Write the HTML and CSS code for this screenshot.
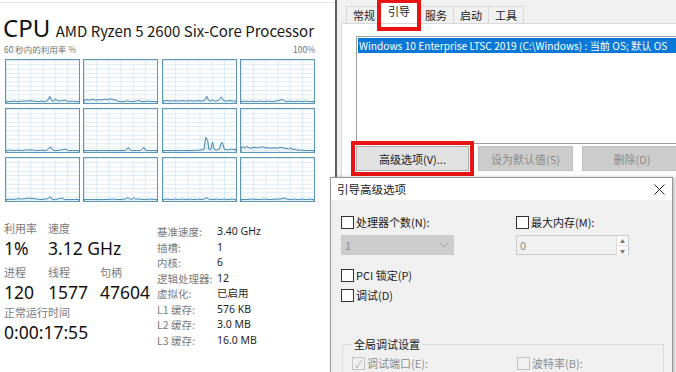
FILE: index.html
```html
<!DOCTYPE html>
<html lang="zh-CN">
<head>
    <meta charset="UTF-8">
    <meta name="viewport" content="width=device-width, initial-scale=1.0">
    <title>CPU - 系统配置</title>
    <link rel="stylesheet" href="styles.css">
</head>
<body>

<div class="screen">
    <!-- 任务管理器 CPU 页 -->
    <section class="taskmgr">
        <div class="cpu-head">
            <span class="cpu-title">CPU</span>
            <span class="cpu-name">AMD Ryzen 5 2600 Six-Core Processor</span>
        </div>
        <div class="graph-caption">
            <span>60 秒内的利用率 %</span>
            <span>100%</span>
        </div>

        <div class="graphs">
            <div class="graph"><svg viewBox="0 0 75 45" preserveAspectRatio="none"><polyline points="0,45 0,43.5 4,43.5 8,43 12,43.5 16,43 20,43 24,42.5 28,43 32,43.5 36,43 40,43.5 43,42 45,38 47,42.5 49,43 51,40.5 53,43 57,42.5 61,42 64,43.5 68,43 72,43.5 75,43.5 75,45"/></svg></div>
            <div class="graph"><svg viewBox="0 0 75 45" preserveAspectRatio="none"><polyline points="0,45 0,42 3,41.5 6,42 9,41 12,42 15,41.5 18,41.8 21,41 24,41.5 27,40.5 30,41.5 33,42 36,43.5 40,43.5 44,43 45,42 46,43.5 50,43.5 54,43 57,42 58,43.5 62,43.5 66,43 70,43.5 75,43.5 75,45"/></svg></div>
            <div class="graph"><svg viewBox="0 0 75 45" preserveAspectRatio="none"><polyline points="0,45 0,43 4,42.5 8,43 12,42.5 16,43 20,42.5 24,43 28,42.5 32,43 36,42.5 40,43 43,42 45,38 47,42.5 49,43 51,41.5 53,43 57,42.5 60,38.5 62,42.5 65,43 69,42.5 72,43 75,43 75,45"/></svg></div>
            <div class="graph"><svg viewBox="0 0 75 45" preserveAspectRatio="none"><polyline points="0,45 0,43.5 4,43 8,43.5 12,43 16,43.5 20,43 24,43.5 28,43 32,43.5 36,43 40,42 42,41.3 44,42 46,43.5 50,43 54,43.5 58,43 62,43.5 66,43 70,43.5 75,43.5 75,45"/></svg></div>
            <div class="graph"><svg viewBox="0 0 75 45" preserveAspectRatio="none"><polyline points="0,45 0,43.5 4,43 8,43.5 12,43 16,43.5 20,43 24,42.8 28,43 32,43.5 36,43 40,43.5 43,42.5 45.5,39.5 48,43 51,43.5 55,43 59,42.5 62,42 64,43.5 68,43.5 72,43.5 75,43.5 75,45"/></svg></div>
            <div class="graph"><svg viewBox="0 0 75 45" preserveAspectRatio="none"><polyline points="0,45 0,43.5 10,43.5 20,43.5 30,43.5 38,43.5 42,43.5 44,42 45.5,40 47,43 50,43.5 54,43.5 58,43.5 60,42 61.5,40 63,43 66,43.5 75,43.5 75,45"/></svg></div>
            <div class="graph"><svg viewBox="0 0 75 45" preserveAspectRatio="none"><polyline points="0,45 0,43.5 10,43.5 20,43.5 30,43.5 38,43 42,42.5 43,36 44,29.5 46,33 47,42 49,42.5 51,34.5 52.5,42 55,43 58,42 59.5,36 61,35 63,42 66,43 70,42 73,42.5 75,42 75,45"/></svg></div>
            <div class="graph"><svg viewBox="0 0 75 45" preserveAspectRatio="none"><polyline points="0,45 0,40.5 2,39.5 4,41 6,39 8,40.5 10,41 13,40 16,40.5 19,40 22,39.5 25,40.5 28,40.5 31,41 34,40.5 37,41 40,40 43,40.5 46,41 49,42 51,40 52.5,42.5 55,42 58,43 62,43 66,43.5 70,43.5 75,43.5 75,45"/></svg></div>
            <div class="graph"><svg viewBox="0 0 75 45" preserveAspectRatio="none"><polyline points="0,45 0,43.5 4,43 8,43.5 12,42.5 16,43 20,42.5 24,42 28,42.5 32,43 36,43.5 40,43 43,42.5 45.5,40.5 47,43 51,43.5 55,42.5 58,42 60,43.5 64,43.5 70,43.5 75,43.5 75,45"/></svg></div>
            <div class="graph"><svg viewBox="0 0 75 45" preserveAspectRatio="none"><polyline points="0,45 0,43.5 10,43.5 20,43.5 30,43 36,43.5 42,43 45,41.5 47,43 50,43 51.5,41.5 53,43 57,43 62,43.5 68,43 75,43.5 75,45"/></svg></div>
            <div class="graph"><svg viewBox="0 0 75 45" preserveAspectRatio="none"><polyline points="0,45 0,43.5 4,43 8,43.5 12,43 16,43.5 20,43 24,43.5 28,43 32,43.5 36,43 40,43.5 43,42.5 45,41.5 47,43 51,43.5 55,43 59,43.5 63,43 67,43.5 71,43 75,43.5 75,45"/></svg></div>
            <div class="graph"><svg viewBox="0 0 75 45" preserveAspectRatio="none"><polyline points="0,45 0,43.5 6,43.5 12,43 18,43.5 24,43 30,43.5 36,43 40,43 43,42.5 45,41.8 47,43 51,43.5 55,43 59,43.5 63,43 67,43.5 71,43 75,43.5 75,45"/></svg></div>
        </div>

        <div class="stats">
            <div class="live">
                <div class="live-row">
                    <div class="stat"><div class="stat-label">利用率</div><div class="stat-value">1%</div></div>
                    <div class="stat"><div class="stat-label">速度</div><div class="stat-value">3.12 GHz</div></div>
                </div>
                <div class="live-row">
                    <div class="stat"><div class="stat-label">进程</div><div class="stat-value">120</div></div>
                    <div class="stat"><div class="stat-label">线程</div><div class="stat-value">1577</div></div>
                    <div class="stat"><div class="stat-label">句柄</div><div class="stat-value">47604</div></div>
                </div>
                <div class="live-row">
                    <div class="stat"><div class="stat-label">正常运行时间</div><div class="stat-value">0:00:17:55</div></div>
                </div>
            </div>

            <dl class="specs">
                <dt>基准速度:</dt><dd>3.40 GHz</dd>
                <dt>插槽:</dt><dd>1</dd>
                <dt>内核:</dt><dd>6</dd>
                <dt>逻辑处理器:</dt><dd>12</dd>
                <dt>虚拟化:</dt><dd>已启用</dd>
                <dt>L1 缓存:</dt><dd>576 KB</dd>
                <dt>L2 缓存:</dt><dd>3.0 MB</dd>
                <dt>L3 缓存:</dt><dd>16.0 MB</dd>
            </dl>
        </div>
    </section>

    <!-- 系统配置 (msconfig) -->
    <section class="msconfig">
        <div class="tabs">
            <span class="tab">常规</span>
            <span class="tab active marked">引导</span>
            <span class="tab">服务</span>
            <span class="tab">启动</span>
            <span class="tab">工具</span>
        </div>
        <div class="tab-page">
            <div class="boot-list">
                <div class="boot-item selected">Windows 10 Enterprise LTSC 2019 (C:\Windows) : 当前 OS; 默认 OS</div>
            </div>
            <div class="boot-buttons">
                <button class="win-btn marked-btn">高级选项(V)...</button>
                <button class="win-btn" disabled>设为默认值(S)</button>
                <button class="win-btn wide" disabled>删除(D)</button>
            </div>
        </div>
    </section>

    <!-- 引导高级选项 对话框 -->
    <div class="dialog">
        <div class="dialog-title">
            <span>引导高级选项</span>
            <svg class="dialog-close" width="11" height="11" viewBox="0 0 11 11"><path d="M0.5 0.5 L10.5 10.5 M10.5 0.5 L0.5 10.5"/></svg>
        </div>
        <div class="dialog-body">
            <div class="option-grid">
                <div class="option">
                    <label class="check"><span class="box"></span>处理器个数(N):</label>
                    <div class="combo"><span>1</span><svg width="10" height="6" viewBox="0 0 10 6"><polyline points="1,1 5,5 9,1"/></svg></div>
                </div>
                <div class="option">
                    <label class="check"><span class="box"></span>最大内存(M):</label>
                    <div class="spin"><span>0</span><span class="spin-arrows"><i>▲</i><i>▼</i></span></div>
                </div>
            </div>
            <label class="check single"><span class="box"></span>PCI 锁定(P)</label>
            <label class="check single"><span class="box"></span>调试(D)</label>

            <fieldset class="group">
                <legend>全局调试设置</legend>
                <div class="group-row">
                    <label class="check disabled"><span class="box checked">✓</span>调试端口(E):</label>
                    <label class="check disabled"><span class="box"></span>波特率(B):</label>
                </div>
            </fieldset>
        </div>
    </div>
</div>

</body>
</html>
```

FILE: styles.css
```css
* {
    box-sizing: border-box;
}
body {
    margin: 0;
    background-color: #ffffff;
    font-family: "Noto Sans CJK SC", sans-serif;
    color: #1a1a1a;
}
.screen {
    position: relative;
    display: flex;
    width: 676px;
    height: 372px;
    overflow: hidden;
}

/* 任务管理器 */
.taskmgr {
    width: 335px;
    flex: none;
    padding: 10px 0 0 3px;
    background-color: #ffffff;
    border-top: 1px solid #e6e6e6;
    margin-top: 2px;
}
.cpu-head {
    display: flex;
    align-items: baseline;
    justify-content: space-between;
    width: 311px;
    height: 30px;
}
.cpu-title {
    font-family: "Noto Sans", sans-serif;
    font-size: 24px;
    line-height: 30px;
    color: #111;
}
.cpu-name {
    font-family: "Noto Sans CJK SC", sans-serif;
    font-size: 15px;
    color: #1a1a1a;
}
.graph-caption {
    display: flex;
    justify-content: space-between;
    width: 312px;
    padding-left: 1px;
    font-size: 8.5px;
    line-height: 12px;
    color: #707070;
}
.graphs {
    display: grid;
    grid-template-columns: repeat(4, 75px);
    grid-auto-rows: 45px;
    column-gap: 3.3px;
    row-gap: 4px;
    margin: 4px 0 0 2px;
}
.graph {
    border: 1px solid #5d97b3;
    background-color: #ffffff;
    background-image:
        linear-gradient(to right, #d9e9f4 1px, transparent 1px),
        linear-gradient(to bottom, #d9e9f4 1px, transparent 1px);
    background-size: 12.2px 100%, 100% 4.3px;
}
.graph svg {
    display: block;
    width: 100%;
    height: 100%;
}
.graph polyline {
    fill: rgba(90, 150, 185, 0.12);
    stroke: #3d88b3;
    stroke-width: 1;
    vector-effect: non-scaling-stroke;
}

.stats {
    display: flex;
    margin-top: 19px;
}
.live {
    width: 154px;
    padding-left: 1px;
}
.live-row {
    display: grid;
    grid-template-columns: 44px 52px auto;
    margin-bottom: 3px;
    white-space: nowrap;
}
.live-row:nth-child(2) {
    margin-bottom: -1px;
}
.stat-label {
    font-size: 11px;
    line-height: 14px;
    color: #7a7a7a;
}
.stat-value {
    font-family: "Noto Sans", sans-serif;
    font-size: 17.5px;
    line-height: 27px;
    color: #111;
}
.specs {
    display: grid;
    grid-template-columns: 60px auto;
    grid-auto-rows: 15.5px;
    margin: 3px 0 0 0;
    font-size: 10.5px;
    line-height: 15.5px;
}
.specs dt {
    color: #7a7a7a;
}
.specs dd {
    margin: 0;
    font-family: "Noto Sans", "Noto Sans CJK SC", sans-serif;
    color: #1f1f1f;
}

/* 系统配置窗口 */
.msconfig {
    flex: 1;
    position: relative;
    background-color: #f0f0f0;
    border-left: 2px solid #5e5e5e;
    padding: 0 0 0 4px;
    font-size: 11px;
}
.tabs {
    display: flex;
    align-items: flex-end;
    height: 23px;
    padding-left: 5px;
}
.tab {
    position: relative;
    height: 17px;
    padding: 0 6px;
    line-height: 16px;
    background-color: #f0f0f0;
    border: 1px solid #d9d9d9;
    border-bottom: none;
    margin-right: -1px;
}
.tab.active {
    height: 21px;
    margin: 0 -1px 0 -2px;
    padding: 0 8px;
    background-color: #ffffff;
    z-index: 1;
    line-height: 17px;
}
.tab.marked::after {
    content: "";
    position: absolute;
    left: -3px;
    top: -4px;
    right: -3px;
    bottom: -8px;
    border: 4px solid #ea1313;
}
.tab-page {
    height: 360px;
    background-color: #ffffff;
    border: 1px solid #d9d9d9;
    border-right: none;
    padding: 12px 0 0 14px;
}
.boot-list {
    height: 108px;
    background-color: #ffffff;
    border: 1px solid #9f9f9f;
    border-right: none;
    padding: 1px 0 0 1px;
}
.boot-item {
    height: 15px;
    line-height: 15px;
    padding-left: 1px;
    font-size: 10.2px;
    white-space: nowrap;
}
.boot-item.selected {
    background-color: #0a78d7;
    color: #ffffff;
}
.boot-buttons {
    display: flex;
    gap: 9px;
    margin-top: 2px;
}
.win-btn {
    width: 113px;
    height: 25px;
    flex: none;
    font-family: "Noto Sans CJK SC", sans-serif;
    font-size: 11px;
    color: #1a1a1a;
    background-color: #e1e1e1;
    border: 1px solid #adadad;
    padding: 0;
}
.win-btn:disabled {
    width: 95px;
    color: #8a8a8a;
    background-color: #cccccc;
    border-color: #bfbfbf;
}
.win-btn.wide {
    width: 100px;
}
.marked-btn {
    outline: 4px solid #ea1313;
    outline-offset: 1px;
}

/* 对话框 */
.dialog {
    position: absolute;
    left: 330px;
    top: 177px;
    width: 343px;
    height: 210px;
    background-color: #f0f0f0;
    border: 1px solid #9a9a9a;
    box-shadow: 2px 0 3px rgba(0, 0, 0, 0.25);
    font-size: 11px;
}
.dialog-title {
    display: flex;
    justify-content: space-between;
    align-items: center;
    height: 22px;
    padding: 0 7px 0 6px;
    background-color: #ffffff;
    font-size: 11.5px;
}
.dialog-close path {
    stroke: #222;
    stroke-width: 1;
}
.dialog-body {
    padding: 16px 10px 0 10px;
}
.option-grid {
    display: grid;
    grid-template-columns: 175px 1fr;
}
.check {
    display: flex;
    align-items: center;
    height: 13px;
    line-height: 13px;
    font-size: 11px;
    color: #1a1a1a;
}
.box {
    width: 13px;
    height: 13px;
    flex: none;
    margin-right: 2px;
    background-color: #ffffff;
    border: 1px solid #333333;
    font-size: 10px;
    line-height: 11px;
    text-align: center;
}
.check.single {
    margin-top: 7px;
}
.option-grid + .check.single {
    margin-top: 14px;
}
.combo, .spin {
    display: flex;
    align-items: center;
    justify-content: space-between;
    width: 113px;
    height: 20px;
    margin-top: 6px;
    padding-left: 3px;
    color: #8c8c8c;
}
.combo {
    background-color: #cccccc;
    border: 1px solid #cccccc;
    padding-right: 4px;
}
.combo polyline {
    fill: none;
    stroke: #a0a0a0;
    stroke-width: 1;
}
.spin {
    background-color: #f0f0f0;
    border: 1px solid #cccccc;
}
.spin-arrows {
    display: flex;
    flex-direction: column;
    width: 12px;
    height: 100%;
    border-left: 1px solid #dcdcdc;
}
.spin-arrows i {
    flex: 1;
    font-style: normal;
    font-size: 5px;
    line-height: 9px;
    text-align: center;
    color: #777;
    background-color: #fafafa;
}
.spin-arrows i + i {
    border-top: 1px solid #e0e0e0;
}
.group {
    margin: 34px 0 0 1px;
    width: 322px;
    height: 60px;
    border: 1px solid #dcdcdc;
    padding: 5px 0 0 9px;
}
.group legend {
    padding: 0 2px;
    font-size: 11px;
    color: #1a1a1a;
}
.group-row {
    display: grid;
    grid-template-columns: 165px 1fr;
}
.check.disabled {
    color: #8d8d8d;
}
.check.disabled .box {
    border-color: #c4c4c4;
    background-color: #f0f0f0;
    color: #a8a8a8;
}
```
